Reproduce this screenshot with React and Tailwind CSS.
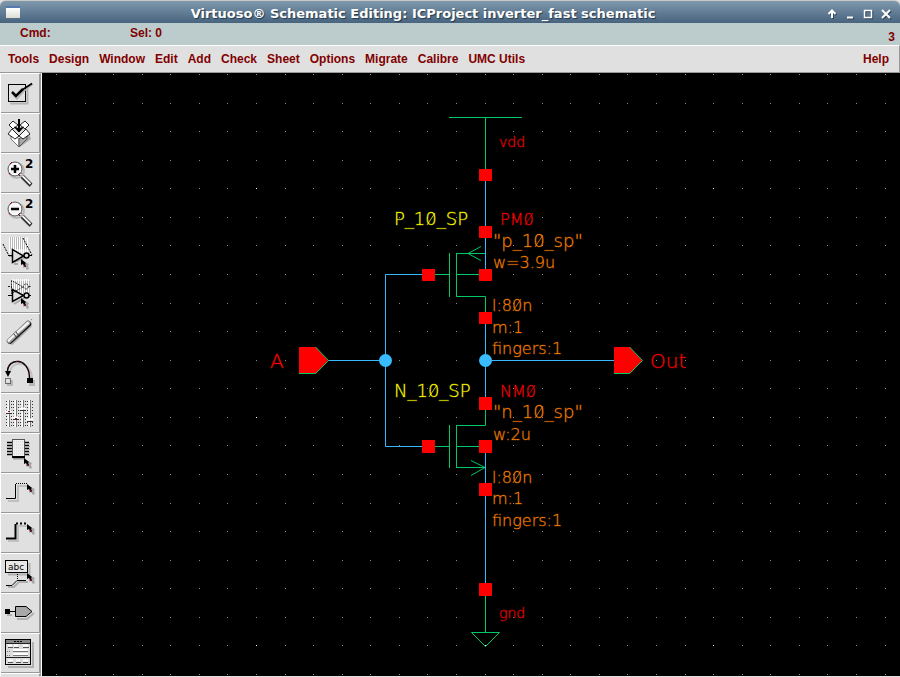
import React from "react";

const MENUS = ["Tools", "Design", "Window", "Edit", "Add", "Check", "Sheet", "Options", "Migrate", "Calibre", "UMC Utils"];

/* ---------- toolbar icons ---------- */

function Cursor({ x, y }) {
  return (
    <g transform={`translate(${x} ${y})`}>
      <path d="M1 1v7l2-1 2 3 2-1-1-3 1-2z" fill="#a8a8a8" transform="translate(1 1)" />
      <path d="M0 0v6l2-1 1.500 3 1.500-1-1-2 1-1z" fill="#000" />
      <path d="M3.500 6l1 2" stroke="#a00018" strokeWidth="1" />
    </g>
  );
}

function CheckSave() {
  return (
    <g fill="none">
      <path d="M27.500 14v16.500H10" stroke="#b4b4b4" strokeWidth="2" />
      <rect x="8.500" y="11.500" width="17" height="17" stroke="#000" />
      <path d="M13 22l4 4 6-7 10-8" stroke="#b0b0b0" strokeWidth="1.500" />
      <path d="M12 19l4 4L23 16" stroke="#000" strokeWidth="2.500" />
      <path d="M22 17L32 10.500" stroke="#000" strokeWidth="1.500" />
    </g>
  );
}

function BoxSave() {
  return (
    <g strokeLinejoin="round">
      <path d="M20 34l11-8-2-5-8 8z" fill="#a8a8a8" />
      <path d="M11 20l8 6v8l-8-8z" fill="#fff" stroke="#777" />
      <path d="M27 20l-8 6v8l8-8z" fill="#a8a8a8" stroke="#555" />
      <path d="M12 14l7-4 7 4-7 9z" fill="#dcdcdc" />
      <path d="M13 8l5 4-5 4-4-4z" fill="#fff" stroke="#222" />
      <path d="M25 8l-5 4 5 4 4-4z" fill="#fff" stroke="#222" />
      <path d="M12 16l7 7-4 3-7-5z" fill="#fff" stroke="#222" />
      <path d="M26 16l-7 7 4 3 7-5z" fill="#fff" stroke="#222" />
      <path d="M19 6v11" stroke="#000" strokeWidth="2" />
      <path d="M14.500 14l4.500 5 4.500-5-4.500 2z" fill="#000" stroke="#000" />
    </g>
  );
}

function Zoom({ plus }) {
  return (
    <g fill="none">
      <path d="M22 24l9 9" stroke="#b0b0b0" strokeWidth="4" />
      <path d="M20 21l11 11" stroke="#222" strokeWidth="4" />
      <path d="M20 20.500l10.500 10.500" stroke="#f4f4f4" strokeWidth="2" />
      <circle cx="16.500" cy="17.500" r="7.500" stroke="#b8b8b8" strokeWidth="2" />
      <circle cx="15" cy="16" r="7" fill="#f4f4f4" stroke="#555" />
      <circle cx="15" cy="16" r="5.500" stroke="#fff" />
      <path d="M10 11l2-2M20 20l-2 2M9 20l1 1.500" stroke="#a00018" />
      <path d="M11 16h8" stroke="#000" strokeWidth="2.500" />
      {plus && <path d="M15 12v8" stroke="#000" strokeWidth="2.500" />}
      <text x="25" y="15" className="fill-black font-['DejaVu_Sans',sans-serif] text-[12px] font-bold">2</text>
    </g>
  );
}

function Stripes({ xs, y1, y2 }) {
  return <path d={xs.map((x) => `M${x}.500 ${y1}V${y2}`).join("")} stroke="#fff" />;
}

function Stretch() {
  return (
    <g fill="none">
      <path d="M9 4h16l3 12H9z" fill="#b8b8b8" />
      <Stripes xs={[9, 11, 13, 15, 17, 19, 21, 23, 25, 27]} y1={4} y2={20} />
      <path d="M3 11l6 12h3M23 5l9 17" stroke="#000" strokeDasharray="2 1" />
      <path d="M14 31h4M14 29l10-4" stroke="#aaa" strokeWidth="2" />
      <path d="M12.500 16.500v13L23.500 23z" stroke="#000" strokeWidth="1.500" />
      <circle cx="26.500" cy="22.500" r="2.500" fill="#e0e0e0" stroke="#000" strokeWidth="1.500" />
      <path d="M29 22.500h3M8 22.500h4" stroke="#000" />
      <Cursor x={21} y={26} />
    </g>
  );
}

function Copy() {
  return (
    <g fill="none">
      <path d="M12 8h18v12H12z" fill="#b8b8b8" />
      <Stripes xs={[12, 14, 16, 18, 20, 22, 24, 26, 28]} y1={6} y2={20} />
      <path d="M11.500 7.500v13L23 14z M8 13.500h4M28.500 13.500h3" stroke="#222" strokeDasharray="2 1" />
      <circle cx="26" cy="13.500" r="2.500" stroke="#222" strokeDasharray="2 1" />
      <path d="M14 31l10-6" stroke="#aaa" strokeWidth="2" />
      <path d="M12.500 16.500v12L23.500 22.500z" stroke="#000" strokeWidth="1.500" />
      <circle cx="26.500" cy="22.500" r="2.500" fill="#e0e0e0" stroke="#000" strokeWidth="1.500" />
      <path d="M29 22.500h2M8 22.500h4" stroke="#000" />
      <Cursor x={21} y={25} />
    </g>
  );
}

function Eraser() {
  return (
    <g fill="none" strokeLinecap="round">
      <path d="M12 31L31 13" stroke="#b0b0b0" strokeWidth="2" />
      <path d="M10 28.500L29 11" stroke="#111" strokeWidth="5" />
      <path d="M9 28L28 10" stroke="#888" strokeWidth="5" />
      <path d="M9 27.500L28 10" stroke="#f4f4f4" strokeWidth="3" />
      <path d="M10 28L28 12" stroke="#aaa" strokeWidth="1" />
      <path d="M29 9l4-4" stroke="#888" strokeDasharray="1 2" />
      <path d="M14 21l3 4M16 19l3 4" stroke="#333" />
    </g>
  );
}

function Undo() {
  return (
    <g fill="none">
      <path d="M10 20c0-13 21-13 22 5" stroke="#c0c0c0" strokeWidth="2" />
      <path d="M7.500 19c0-15 22-15 22 6" stroke="#000" strokeWidth="1.500" />
      <path d="M7.500 19c0-15 22-15 22 6" stroke="#c00020" strokeDasharray="1 4" />
      <path d="M5 18h6l-3 6z" fill="#000" />
      <rect x="7" y="27" width="6" height="6" fill="#b8b8b8" />
      <rect x="5.500" y="25.500" width="5" height="5" fill="#e0e0e0" stroke="#000" strokeDasharray="1 1" />
      <rect x="29" y="27" width="6" height="6" fill="#b8b8b8" />
      <rect x="27" y="25" width="6" height="5" fill="#000" />
    </g>
  );
}

function Properties() {
  return (
    <g fill="none">
      {[7, 14, 21, 28].map((x, i) => (
        <g key={x}>
          <path d={`M${x - 1}.500 8V33M${x + 4}.500 8V33`} stroke="#333" strokeDasharray="1 2" />
          <path d={`M${x + 1}.500 7V34`} stroke="#fff" strokeWidth="2" />
          <path d={`M${x + 2}.500 7V34`} stroke="#777" />
          <path d={`M${x - 2} ${[18, 24, 15, 26][i]}.500h7`} stroke="#fff" strokeWidth="2" />
          <path d={`M${x - 1} ${[20, 26, 17, 28][i]}.500h6`} stroke="#333" />
        </g>
      ))}
      <path d="M8 18.500h2M15 25.500h2" stroke="#a00018" />
    </g>
  );
}

const PIN_ROWS = [9, 12, 15, 18, 21];

function Instance() {
  return (
    <g fill="none">
      <path d={PIN_ROWS.map((y) => `M7 ${y}.500h5M25 ${y}.500h4`).join("")} stroke="#000" strokeWidth="1.500" />
      <path d={PIN_ROWS.map((y) => `M8 ${y + 1}.500h4M26 ${y + 1}.500h4`).join("")} stroke="#aaa" />
      <path d="M13 25h12" stroke="#999" strokeWidth="3" />
      <rect x="12.500" y="6.500" width="12" height="17" fill="#f0f0f0" stroke="#555" />
      <path d="M14 9h10M14 12h10M14 15h10M14 18h10M14 21h10" stroke="#cfcfcf" strokeDasharray="1 1" />
      <path d="M12 24h13" stroke="#000" strokeWidth="2" />
      <Cursor x={24} y={25} />
    </g>
  );
}

function Wire({ wide }) {
  const w = wide ? 2 : 1;
  return (
    <g fill="none">
      <path d="M8 28h10V13h10" stroke="#c0c0c0" strokeWidth="2" />
      <path d="M6 25.500h9.500V11" stroke="#000" strokeWidth={w} />
      <path d="M16 10.500h12" stroke="#000" strokeWidth={w} strokeDasharray={wide ? "2 2" : "1 1"} />
      <Cursor x={27} y={11} />
    </g>
  );
}

function WireName() {
  return (
    <g fill="none">
      <path d="M8 21.500h21.500V10" stroke="#b0b0b0" strokeWidth="2" />
      <rect x="5.500" y="7.500" width="22" height="12" fill="#e8e8e8" stroke="#000" />
      <text x="8" y="17" className="fill-black font-['DejaVu_Sans',sans-serif] text-[9px] font-normal">abc</text>
      <path d="M8 34h6l5-5h9" stroke="#b0b0b0" strokeWidth="2" />
      <path d="M6 32.500h6l5-5h9" stroke="#000" />
      <path d="M17.500 21v6" stroke="#000" strokeDasharray="1 1" />
      <Cursor x={27} y={20} />
    </g>
  );
}

function Pin() {
  return (
    <g>
      <path d="M17 26h10l7-6" fill="none" stroke="#b0b0b0" strokeWidth="2" />
      <path d="M7 22h5" stroke="#b0b0b0" strokeWidth="2" />
      <rect x="5" y="16" width="5" height="5" />
      <path d="M10 18.500h5" stroke="#000" />
      <path d="M15.500 13.500H26l6 5-6 5H15.500z" fill="#a8a8a8" stroke="#000" />
    </g>
  );
}

function Form() {
  return (
    <g fill="none">
      <path d="M8 34h25V9" stroke="#b0b0b0" strokeWidth="2" />
      <rect x="5.500" y="6.500" width="25" height="25" fill="#dcdcdc" stroke="#000" />
      <path d="M6 8.500h24" stroke="#888" strokeWidth="3" />
      <path d="M14 8.500h8" stroke="#000" strokeDasharray="2 1" />
      <path d="M6 10.500h24M6 24.500h24" stroke="#222" />
      <path d="M8 12.500h4M14 12.500h4M23 12.500h5M13 17h15M13 21h15M8 27.500h5M16 27.500h4M23 27.500h5" stroke="#fff" strokeWidth="2" />
      <path d="M8 14.500h5M14 14.500h5M23 14.500h6M8 29.500h5M16 29.500h5M23 29.500h5" stroke="#555" />
      <path d="M7 18.500h4M7 22.500h4" stroke="#777" strokeDasharray="1 1" />
      <path d="M13 18.500h15M13 22.500h15" stroke="#777" />
    </g>
  );
}

const TOOLS = [
  { name: "Check and Save", icon: <CheckSave /> },
  { name: "Save", icon: <BoxSave /> },
  { name: "Zoom In by 2", icon: <Zoom plus /> },
  { name: "Zoom Out by 2", icon: <Zoom /> },
  { name: "Stretch", icon: <Stretch /> },
  { name: "Copy", icon: <Copy /> },
  { name: "Delete", icon: <Eraser /> },
  { name: "Undo", icon: <Undo /> },
  { name: "Property", icon: <Properties /> },
  { name: "Instance", icon: <Instance /> },
  { name: "Wire (narrow)", icon: <Wire /> },
  { name: "Wire (wide)", icon: <Wire wide /> },
  { name: "Wire Name", icon: <WireName /> },
  { name: "Pin", icon: <Pin /> },
  { name: "Command Options", icon: <Form /> },
  { name: "Repeat", icon: null },
];

/* ---------- schematic ---------- */

const PITCH = 200 / 7;
const gridX = (i) => 14 + Math.round(i * PITCH);
const gridY = (j) => 1 + Math.round(j * PITCH);

function gridPath(major) {
  let d = "";
  for (let j = 0; j < 50; j++) {
    for (let i = 0; i < 80; i++) {
      const isMajor = i % 8 === 7 && j % 8 === 4;
      if (isMajor === major) d += `M${gridX(i)} ${gridY(j)}h1v1h-1z`;
    }
  }
  return d;
}

const MINOR_DOTS = gridPath(false);
const MAJOR_DOTS = gridPath(true);

const PINS = [
  [479, 169], [479, 226], [479, 269], [479, 312], [422, 269],
  [479, 397], [422, 440], [479, 440], [479, 483], [479, 583],
];

const RED = "fill-[#ff0000] stroke-[#ff0000]";
const YELLOW = "fill-[#ffff00] stroke-[#ffff00]";
const ORANGE = "fill-[#ff8000] stroke-[#ff8000]";

/* zero: left edge of the label's "0", which gets a slash */
const LABELS = [
  { x: 499, y: 147, text: "vdd", color: RED, size: "text-[14px]" },
  { x: 500, y: 225, text: "PM0", color: RED, size: "text-[16px]", zero: 524 },
  { x: 500, y: 397, text: "NM0", color: RED, size: "text-[16px]", zero: 526 },
  { x: 499, y: 618, text: "gnd", color: RED, size: "text-[14px]" },
  { x: 270, y: 368, text: "A", color: RED, size: "text-[20px]" },
  { x: 650, y: 368, text: "Out", color: RED, size: "text-[20px]" },
  { x: 394, y: 225, text: "P_10_SP", color: YELLOW, size: "text-[18px]", zero: 426 },
  { x: 394, y: 397, text: "N_10_SP", color: YELLOW, size: "text-[18px]", zero: 428 },
  { x: 493, y: 247, text: "\"p_10_sp\"", color: ORANGE, size: "text-[18px]", zero: 534 },
  { x: 493, y: 268, text: "w=3.9u", color: ORANGE, size: "text-[16px]" },
  { x: 492, y: 311, text: "l:80n", color: ORANGE, size: "text-[16px]", zero: 512 },
  { x: 492, y: 333, text: "m:1", color: ORANGE, size: "text-[16px]" },
  { x: 492, y: 354, text: "fingers:1", color: ORANGE, size: "text-[16px]" },
  { x: 493, y: 418, text: "\"n_10_sp\"", color: ORANGE, size: "text-[18px]", zero: 534 },
  { x: 493, y: 440, text: "w:2u", color: ORANGE, size: "text-[16px]" },
  { x: 492, y: 483, text: "l:80n", color: ORANGE, size: "text-[16px]", zero: 512 },
  { x: 492, y: 504, text: "m:1", color: ORANGE, size: "text-[16px]" },
  { x: 492, y: 526, text: "fingers:1", color: ORANGE, size: "text-[16px]" },
];

function Label({ x, y, text, color, size, zero }) {
  return (
    <g className={color}>
      <text x={x} y={y} strokeOpacity="0.3" className={size}>{text}</text>
      {zero && <path d={`M${zero + 1} ${y}l8-12`} strokeOpacity="0.8" />}
    </g>
  );
}

function Schematic() {
  return (
    <svg className="absolute inset-0 h-full w-full" aria-label="Inverter schematic">
      <path d={MINOR_DOTS} fill="#8c8c98" shapeRendering="crispEdges" />
      <path d={MAJOR_DOTS} fill="#ffffff" shapeRendering="crispEdges" />
      <g transform="translate(-42 -73)" fill="none">
        <g stroke="#00c864">
          <path d="M449 117.500h73M485.500 117v52" />
          <path d="M435 274.500h14M449.500 253v44M456.500 253v44M456 253.500h30M456 274.500h23M456 296.500h29.500V312M481 246.500l-13 7 13 7" />
          <path d="M435 446.500h14M449.500 425v43M456.500 425v43M456 467.500h29M456 446.500h23M456 425.500h29.500V410M471 460.500l14 7-14 8" />
          <path d="M485.500 596v36M471.500 632.500h28l-14 14z" />
        </g>
        <g stroke="#38b8ff">
          <path d="M485.500 181v88M485.500 324v73M485.500 453v130" />
          <path d="M422 274.500H385.500V446.500H422M328 360.500h57M485 360.500h129" />
        </g>
        <g fill="#38bcff">
          <circle cx="385.500" cy="360.500" r="6.500" />
          <circle cx="485.500" cy="360.500" r="6.500" />
        </g>
        <g fill="#ff0000">
          {PINS.map(([x, y]) => (
            <rect key={`${x}-${y}`} x={x} y={y} width="13" height={y > 390 ? 13 : 12} />
          ))}
          <path d="M299 347h17l12 13.500L316 374h-17z" />
          <path d="M614 347h16l12 13.500L630 374h-16z" />
        </g>
        <path d="M315.500 347l13 13.500-13 13H299M629.500 347l13 13.500-13 13H614" stroke="#00c864" />
        <g className="font-['DejaVu_Sans','DejaVu_Sans_Light',sans-serif] font-extralight">
          {LABELS.map((l) => (
            <Label key={`${l.x}-${l.y}`} {...l} />
          ))}
        </g>
      </g>
    </svg>
  );
}

/* ---------- window frame ---------- */

function WindowButton({ name, children }) {
  return (
    <button type="button" aria-label={name} className="h-3 w-3 drop-shadow-[1px_1px_0_#2f4458]">
      <svg viewBox="0 0 12 12" className="h-3 w-3" fill="none" stroke="#fff" strokeWidth="2">{children}</svg>
    </button>
  );
}

function TitleBar() {
  return (
    <header className="flex h-[23px] shrink-0 items-center rounded-t-md border-t border-[#c8c8c4] bg-gradient-to-b from-[#7f98ac] to-[#48647f] pt-1 pr-2 pl-[6px]">
      <span className="mb-1 h-3 w-[14px] border-t-2 border-[#5878b0] bg-gradient-to-b from-white to-[#dcdcd4]" />
      <h1 className="flex-1 text-center font-['DejaVu_Sans',sans-serif] text-[13px] leading-4 font-bold whitespace-nowrap text-white [text-shadow:1px_1px_1px_#22384c]">
        Virtuoso® Schematic Editing: ICProject inverter_fast schematic
      </h1>
      <div className="flex gap-[6px]">
        <WindowButton name="Shade"><path d="M6 10V3M2.500 6L6 2.500 9.500 6" /></WindowButton>
        <WindowButton name="Minimize"><path d="M3 9.500h6" /></WindowButton>
        <WindowButton name="Maximize"><rect x="2.500" y="2.500" width="7" height="7" strokeWidth="1.500" /></WindowButton>
        <WindowButton name="Close"><path d="M2 2l8 8M10 2l-8 8" /></WindowButton>
      </div>
    </header>
  );
}

export default function App() {
  return (
    <div className="flex h-screen flex-col overflow-hidden bg-[#e0e0e0] font-['Liberation_Sans',Arial,sans-serif] text-xs font-bold text-[#800000]">
      <TitleBar />
      <div className="flex h-[22px] shrink-0 bg-[#bccccc] pr-[5px] pl-5 leading-5">
        <span className="w-[110px]">Cmd:</span>
        <span className="flex-1">Sel: 0</span>
        <span className="self-end leading-4">3</span>
      </div>
      <nav className="flex h-7 shrink-0 items-center gap-[10px] border-t border-r border-b border-t-white border-r-[#989898] border-b-[#989898] pr-[10px] pl-2">
        {MENUS.map((m) => (
          <button type="button" key={m} className="whitespace-nowrap">{m}</button>
        ))}
        <button type="button" className="ml-auto">Help</button>
      </nav>
      <main className="flex min-h-0 flex-1 border-b border-[#e0e0e0]">
        <div className="flex w-[41px] shrink-0 flex-col overflow-hidden border-l border-white" role="toolbar" aria-label="Schematic tools">
          {TOOLS.map((t) => (
            <button
              type="button"
              key={t.name}
              aria-label={t.name}
              className="h-10 w-10 shrink-0 border-t border-r-2 border-b border-t-white border-r-[#989898] border-b-[#989898]"
            >
              <svg viewBox="1 1 37 38" className="block h-[38px] w-[37px]">{t.icon}</svg>
            </button>
          ))}
        </div>
        <div className="relative flex-1 overflow-hidden border-l border-white bg-black">
          <Schematic />
        </div>
      </main>
    </div>
  );
}
